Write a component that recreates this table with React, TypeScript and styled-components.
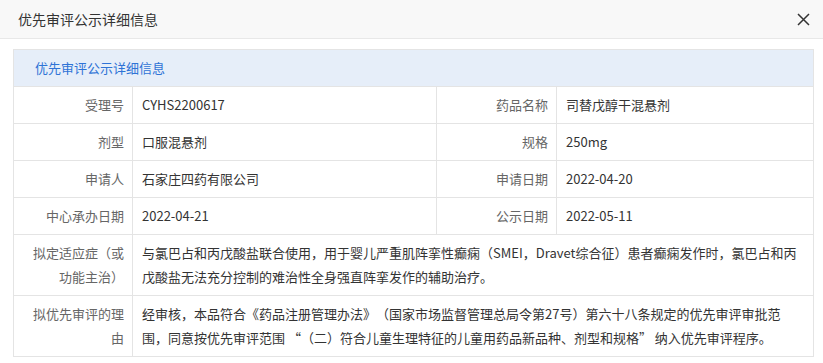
import styled, { createGlobalStyle } from "styled-components";

const GlobalStyle = createGlobalStyle`
  body{
    margin:0;
    background:#fff;
    font-family:"Noto Sans CJK SC","Noto Sans",sans-serif;
    text-spacing-trim:space-all;
  }
`;

const Dialog = styled.div`
  width:823px;
  height:363px;
  background:#fff;
  overflow:hidden;
`;

const Header = styled.div`
  height:39px;
  display:flex;
  align-items:center;
  justify-content:space-between;
  padding:0 13px 0 18px;
  background:#f8f8f8;
  border-bottom:1px solid #e8e8e8;
  box-sizing:border-box;
`;

const HeaderTitle = styled.div`
  font-size:14px;
  color:#333;
`;

const CloseButton = styled.button`
  border:none;
  background:transparent;
  padding:0;
  width:14px;
  height:14px;
  display:flex;
  align-items:center;
  justify-content:center;
  cursor:pointer;
`;

const Body = styled.div`
  padding:10px 10px 0 13px;
`;

const Table = styled.table`
  width:800px;
  border-collapse:collapse;
  table-layout:fixed;
  font-size:13px;
  line-height:24px;

  td{
    border:1px solid #e4e4e4;
    padding:6px 9px;
    vertical-align:middle;
  }
`;

const Caption = styled.td`
  background:#e6eef9;
  color:#2f73d6;
  padding-left:21px !important;
`;

const Label = styled.td`
  color:#666;
  text-align:right;
  padding-right:8px !important;
`;

const Value = styled.td`
  color:#333;
`;

type Pair = [string, string];

const pairs: [Pair, Pair][] = [
  [["受理号", "CYHS2200617"], ["药品名称", "司替戊醇干混悬剂"]],
  [["剂型", "口服混悬剂"], ["规格", "250mg"]],
  [["申请人", "石家庄四药有限公司"], ["申请日期", "2022-04-20"]],
  [["中心承办日期", "2022-04-21"], ["公示日期", "2022-05-11"]],
];

const wide: Pair[] = [
  [
    "拟定适应症（或功能主治）",
    "与氯巴占和丙戊酸盐联合使用，用于婴儿严重肌阵挛性癫痫（SMEI，Dravet综合征）患者癫痫发作时，氯巴占和丙戊酸盐无法充分控制的难治性全身强直阵挛发作的辅助治疗。",
  ],
  [
    "拟优先审评的理由",
    "经审核，本品符合《药品注册管理办法》（国家市场监督管理总局令第27号）第六十八条规定的优先审评审批范围，同意按优先审评范围 “（二）符合儿童生理特征的儿童用药品新品种、剂型和规格” 纳入优先审评程序。",
  ],
];

const App = () => {
  return (
    <Dialog>
      <GlobalStyle />
      <Header>
        <HeaderTitle>优先审评公示详细信息</HeaderTitle>
        <CloseButton aria-label="关闭">
          <svg width="13" height="13" viewBox="0 0 13 13">
            <path d="M1 1L12 12M12 1L1 12" stroke="#333" strokeWidth="1.5" />
          </svg>
        </CloseButton>
      </Header>

      <Body>
        <Table>
          <colgroup>
            <col style={{ width: 119 }} />
            <col style={{ width: 304 }} />
            <col style={{ width: 120 }} />
            <col style={{ width: 257 }} />
          </colgroup>
          <tbody>
            <tr>
              <Caption colSpan={4}>优先审评公示详细信息</Caption>
            </tr>
            {pairs.map(([a, b]) => (
              <tr key={a[0]}>
                <Label>{a[0]}</Label>
                <Value>{a[1]}</Value>
                <Label>{b[0]}</Label>
                <Value>{b[1]}</Value>
              </tr>
            ))}
            {wide.map(([k, v]) => (
              <tr key={k}>
                <Label>{k}</Label>
                <Value colSpan={3}>{v}</Value>
              </tr>
            ))}
          </tbody>
        </Table>
      </Body>
    </Dialog>
  );
};

export default App;
